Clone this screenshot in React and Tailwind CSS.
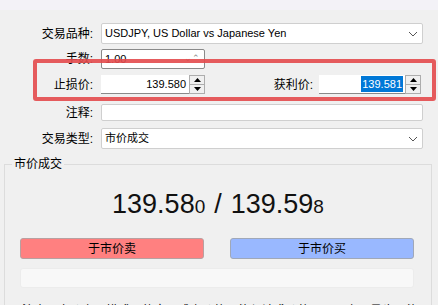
import React from 'react'

const font = "font-['Liberation_Sans','Noto_Sans_CJK_SC',sans-serif]"

// Small up/down spinner like a Windows numeric edit
function Spinner() {
  return (
    <div className="w-[16px] h-full flex flex-col border border-[#adadad] bg-[#f0f0f0]">
      <div className="flex-1 flex items-center justify-center border-b border-[#adadad]">
        <svg width="7" height="4" viewBox="0 0 7 4"><path d="M3.5 0 L7 4 L0 4 Z" fill="#000" /></svg>
      </div>
      <div className="flex-1 flex items-center justify-center">
        <svg width="7" height="4" viewBox="0 0 7 4"><path d="M0 0 L7 0 L3.5 4 Z" fill="#000" /></svg>
      </div>
    </div>
  )
}

function Chevron() {
  return (
    <svg width="10" height="6" viewBox="0 0 10 6" className="mr-[4px]">
      <path d="M1 1 L5 5 L9 1" fill="none" stroke="#555" strokeWidth="1" />
    </svg>
  )
}

function Label({ children }) {
  return <div className="w-[93px] shrink-0 text-right text-[12px] text-black">{children}</div>
}

function Combo({ children }) {
  return (
    <div className="ml-[8px] flex-1 h-full flex items-center justify-between bg-white border border-[#cfcfcf] rounded-[2px] pl-[3px]">
      <span className="text-[11px] text-black">{children}</span>
      <Chevron />
    </div>
  )
}

export default function App() {
  return (
    <div className={`relative w-[438px] h-[305px] overflow-hidden bg-[#f0f0f0] ${font}`}>
      <div className="h-[10px] bg-[#f3f2f7]" />

      {/* Form rows */}
      <div className="flex flex-col pr-[15px]">
        <div className="mt-[13px] h-[21px] flex items-center">
          <Label>交易品种:</Label>
          <Combo>USDJPY, US Dollar vs Japanese Yen</Combo>
        </div>

        <div className="mt-[5px] h-[20px] flex items-center">
          <Label>手数:</Label>
          <div className="ml-[8px] w-[104px] h-full flex items-center justify-between bg-white border border-[#8a8a8a] rounded-[2px] pl-[3px] pr-[4px]">
            <span className="text-[11px]">1.00</span>
            <span className="text-[9px] text-[#888]">⌄⌃</span>
          </div>
        </div>

        <div className="mt-[6px] h-[19px] flex items-center pr-[2px]">
          <Label>止损价:</Label>
          <div className="ml-[8px] w-[88px] h-full flex items-center justify-end bg-white border-b border-[#8a8a8a] pr-[3px]">
            <span className="text-[11px]">139.580</span>
          </div>
          <Spinner />
          <div className="flex-1" />
          <div className="text-[12px] mr-[6px]">获利价:</div>
          <div className="w-[86px] h-full flex items-center justify-end bg-white border-b border-[#8a8a8a] pr-[2px]">
            <span className="text-[11px] bg-[#0078d7] text-white px-[1px]">139.581</span>
          </div>
          <Spinner />
        </div>

        <div className="mt-[10px] h-[17px] flex items-center">
          <Label>注释:</Label>
          <div className="ml-[8px] flex-1 h-full bg-white border border-[#cfcfcf] rounded-[2px]" />
        </div>

        <div className="mt-[7px] h-[21px] flex items-center">
          <Label>交易类型:</Label>
          <Combo>市价成交</Combo>
        </div>
      </div>

      {/* Market execution group */}
      <fieldset className="ml-[4px] mt-[8px] w-[428px] min-w-0 border border-[#dcdcdc] px-[15px] pb-[10px]">
        <legend className="-ml-[8px] px-[2px] text-[12px] leading-[14px]">市价成交</legend>

        <div className="h-[67px] flex items-center justify-center text-[27px] text-[#111]">
          <span>139.58</span>
          <span className="text-[19px] mt-[5px]">0</span>
          <span className="mx-[9px]">/</span>
          <span>139.59</span>
          <span className="text-[19px] mt-[5px]">8</span>
        </div>

        <div className="flex gap-[26px]">
          <button className="w-[184px] h-[21px] bg-[#ff8080] border border-[#b8a0a0] rounded-[3px] text-[12px] leading-none text-black">
            于市价卖
          </button>
          <button className="w-[184px] h-[21px] bg-[#99b8ff] border border-[#a0a8b8] rounded-[3px] text-[12px] leading-none text-black">
            于市价买
          </button>
        </div>

        <div className="mt-[9px] w-[394px] h-[20px] bg-[#f8f8f8] rounded-[3px] border border-[#ececec]" />

        <p className="mt-[14px] pl-[2px] text-[12px] whitespace-nowrap overflow-hidden">
          注意：市价交易模式下的实际成交价格可能与请求价格不同，交易量也可能变化！
        </p>
      </fieldset>

      {/* Red annotation frame */}
      <div className="absolute left-[33px] top-[59px] w-[403px] h-[42px] border-[4px] border-[#e34a4d] rounded-[3px] opacity-90" />
    </div>
  )
}
